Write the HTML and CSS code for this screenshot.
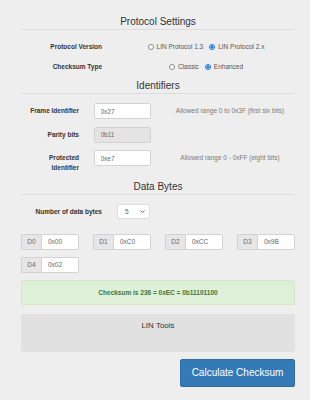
FILE: index.html
```html
<!DOCTYPE html>
<html lang="en">
<head>
    <meta charset="UTF-8">
    <meta name="viewport" content="width=device-width, initial-scale=1.0">
    <title>LIN Checksum</title>
    <link rel="stylesheet" href="styles.css">
</head>
<body>
    <div class="container">
        <h4 class="section-title">Protocol Settings</h4>
        <div class="settings-grid">
            <label class="control-label">Protocol Version</label>
            <div class="radios">
                <label class="radio"><input type="radio" name="protocol"> LIN Protocol 1.3</label>
                <label class="radio"><input type="radio" name="protocol" checked> LIN Protocol 2.x</label>
            </div>
            <label class="control-label">Checksum Type</label>
            <div class="radios">
                <label class="radio"><input type="radio" name="checksum"> Classic</label>
                <label class="radio"><input type="radio" name="checksum" checked> Enhanced</label>
            </div>
        </div>

        <h4 class="section-title">Identifiers</h4>
        <div class="id-grid">
            <label class="control-label" for="frameId">Frame Identifier</label>
            <input type="text" id="frameId" class="form-control" value="0x27">
            <p class="help">Allowed range 0 to 0x3F (first six bits)</p>

            <label class="control-label" for="parity">Parity bits</label>
            <input type="text" id="parity" class="form-control" value="0b11" disabled>
            <p class="help"></p>

            <label class="control-label" for="protectedId">Protected Identifier</label>
            <input type="text" id="protectedId" class="form-control" value="0xe7">
            <p class="help">Allowed range 0 - 0xFF (eight bits)</p>
        </div>

        <h4 class="section-title">Data Bytes</h4>
        <div class="count-row">
            <label class="control-label" for="byteCount">Number of data bytes</label>
            <div class="select-wrap">
                <select id="byteCount" class="form-select">
                    <option>1</option>
                    <option>2</option>
                    <option>3</option>
                    <option>4</option>
                    <option selected>5</option>
                    <option>6</option>
                    <option>7</option>
                    <option>8</option>
                </select>
                <svg class="chevron" width="5" height="3" viewBox="0 0 5 3"><path d="M0.5 0.5 L2.5 2.5 L4.5 0.5" fill="none" stroke="#555" stroke-width="0.9"/></svg>
            </div>
        </div>

        <div class="bytes-grid">
            <div class="input-group"><span class="addon">D0</span><input type="text" class="form-control" value="0x00"></div>
            <div class="input-group"><span class="addon">D1</span><input type="text" class="form-control" value="0xC0"></div>
            <div class="input-group"><span class="addon">D2</span><input type="text" class="form-control" value="0xCC"></div>
            <div class="input-group"><span class="addon">D3</span><input type="text" class="form-control" value="0x9B"></div>
            <div class="input-group"><span class="addon">D4</span><input type="text" class="form-control" value="0x02"></div>
        </div>

        <div class="alert-success">Checksum is 236 = 0xEC = 0b11101100</div>

        <div class="tools">LIN Tools</div>

        <div class="actions">
            <button type="button" class="btn">Calculate Checksum</button>
        </div>
    </div>
</body>
</html>
```

FILE: styles.css
```css
:root{
    --page-color: #eeeeee;
    --rule-color: #dcdcdc;
    --border-color: #d2d2d2;
    --blue-color: #337ab7;
}
*{
    padding: 0;
    margin: 0;
    box-sizing: border-box;
}
body{
    font-family: 'Liberation Sans', Arial, sans-serif;
    font-size: 6.5px;
    line-height: 9.6px;
    color: #333;
    background-color: var(--page-color);
}
.container{
    width: 274px;
    margin-left: 21px;
    padding-top: 16px;
}
.section-title{
    font-size: 10px;
    font-weight: normal;
    line-height: 12px;
    text-align: center;
    padding-bottom: 1px;
    border-bottom: 1px solid var(--rule-color);
}
.control-label{
    font-weight: bold;
    text-align: right;
}
.settings-grid{
    display: grid;
    grid-template-columns: 81px 178px;
    column-gap: 15px;
    grid-auto-rows: 20px;
    align-items: center;
    margin-top: 7px;
    margin-bottom: 3px;
}
.radios{
    display: flex;
    justify-content: center;
    align-items: center;
    gap: 6px;
    color: #555;
}
.radio{
    display: flex;
    align-items: center;
    gap: 3px;
}
.radio input{
    appearance: none;
    width: 6px;
    height: 6px;
    border: 1px solid #8a8a8a;
    border-radius: 50%;
    background-color: #fff;
}
.radio input:checked{
    border-color: #1a73e8;
    background: radial-gradient(circle, #1a73e8 0 1.3px, #fff 1.8px);
}
.id-grid{
    display: grid;
    grid-template-columns: 58px 57px 130px;
    column-gap: 14.5px;
    row-gap: 7.5px;
    align-items: start;
    margin-top: 9px;
    margin-bottom: 8.6px;
}
.id-grid .control-label{
    padding-top: 3.2px;
}
.help{
    text-align: center;
    color: #7a7a7a;
    padding-top: 3.2px;
}
.form-control{
    display: block;
    width: 100%;
    height: 16px;
    padding: 0 6px;
    font-family: inherit;
    font-size: 6.5px;
    color: #666;
    background-color: #fff;
    border: 1px solid var(--border-color);
    border-radius: 2px;
    outline: none;
}
.form-control:disabled{
    background-color: #e4e4e4;
}
.count-row{
    display: grid;
    grid-template-columns: 81px 178px;
    column-gap: 15px;
    align-items: center;
    margin-top: 9px;
}
.select-wrap{
    position: relative;
    width: 33px;
    height: 15px;
}
.form-select{
    appearance: none;
    width: 100%;
    height: 100%;
    padding-left: 7px;
    font-family: inherit;
    font-size: 6.5px;
    color: #666;
    background-color: #fff;
    border: 1px solid #dedede;
    border-radius: 2px;
    outline: none;
}
.chevron{
    position: absolute;
    right: 5px;
    top: 6px;
}
.bytes-grid{
    display: grid;
    grid-template-columns: repeat(4, 1fr);
    column-gap: 14px;
    row-gap: 7px;
    margin-top: 15px;
}
.input-group{
    display: flex;
    height: 16px;
}
.addon{
    width: 20px;
    flex: none;
    display: flex;
    align-items: center;
    justify-content: center;
    color: #666;
    background-color: #e6e6e6;
    border: 1px solid var(--border-color);
    border-right: none;
    border-radius: 2px 0 0 2px;
}
.input-group .form-control{
    min-width: 0;
    flex: 1;
    border-radius: 0 2px 2px 0;
}
.alert-success{
    margin-top: 7px;
    height: 25px;
    line-height: 23px;
    text-align: center;
    font-weight: bold;
    color: #3c763d;
    background-color: #dff0d8;
    border: 1px solid #d6e9c6;
    border-radius: 2px;
}
.tools{
    margin-top: 9px;
    height: 38px;
    padding-top: 7px;
    font-size: 8px;
    line-height: 10px;
    text-align: center;
    background-color: #e1e1e1;
    border-radius: 2px;
}
.actions{
    display: flex;
    justify-content: flex-end;
    margin-top: 7px;
}
.btn{
    width: 115px;
    height: 28px;
    font-family: inherit;
    font-size: 10px;
    color: #fff;
    background-color: var(--blue-color);
    border: 1px solid #2e6da4;
    border-radius: 2px;
    cursor: pointer;
}
```
